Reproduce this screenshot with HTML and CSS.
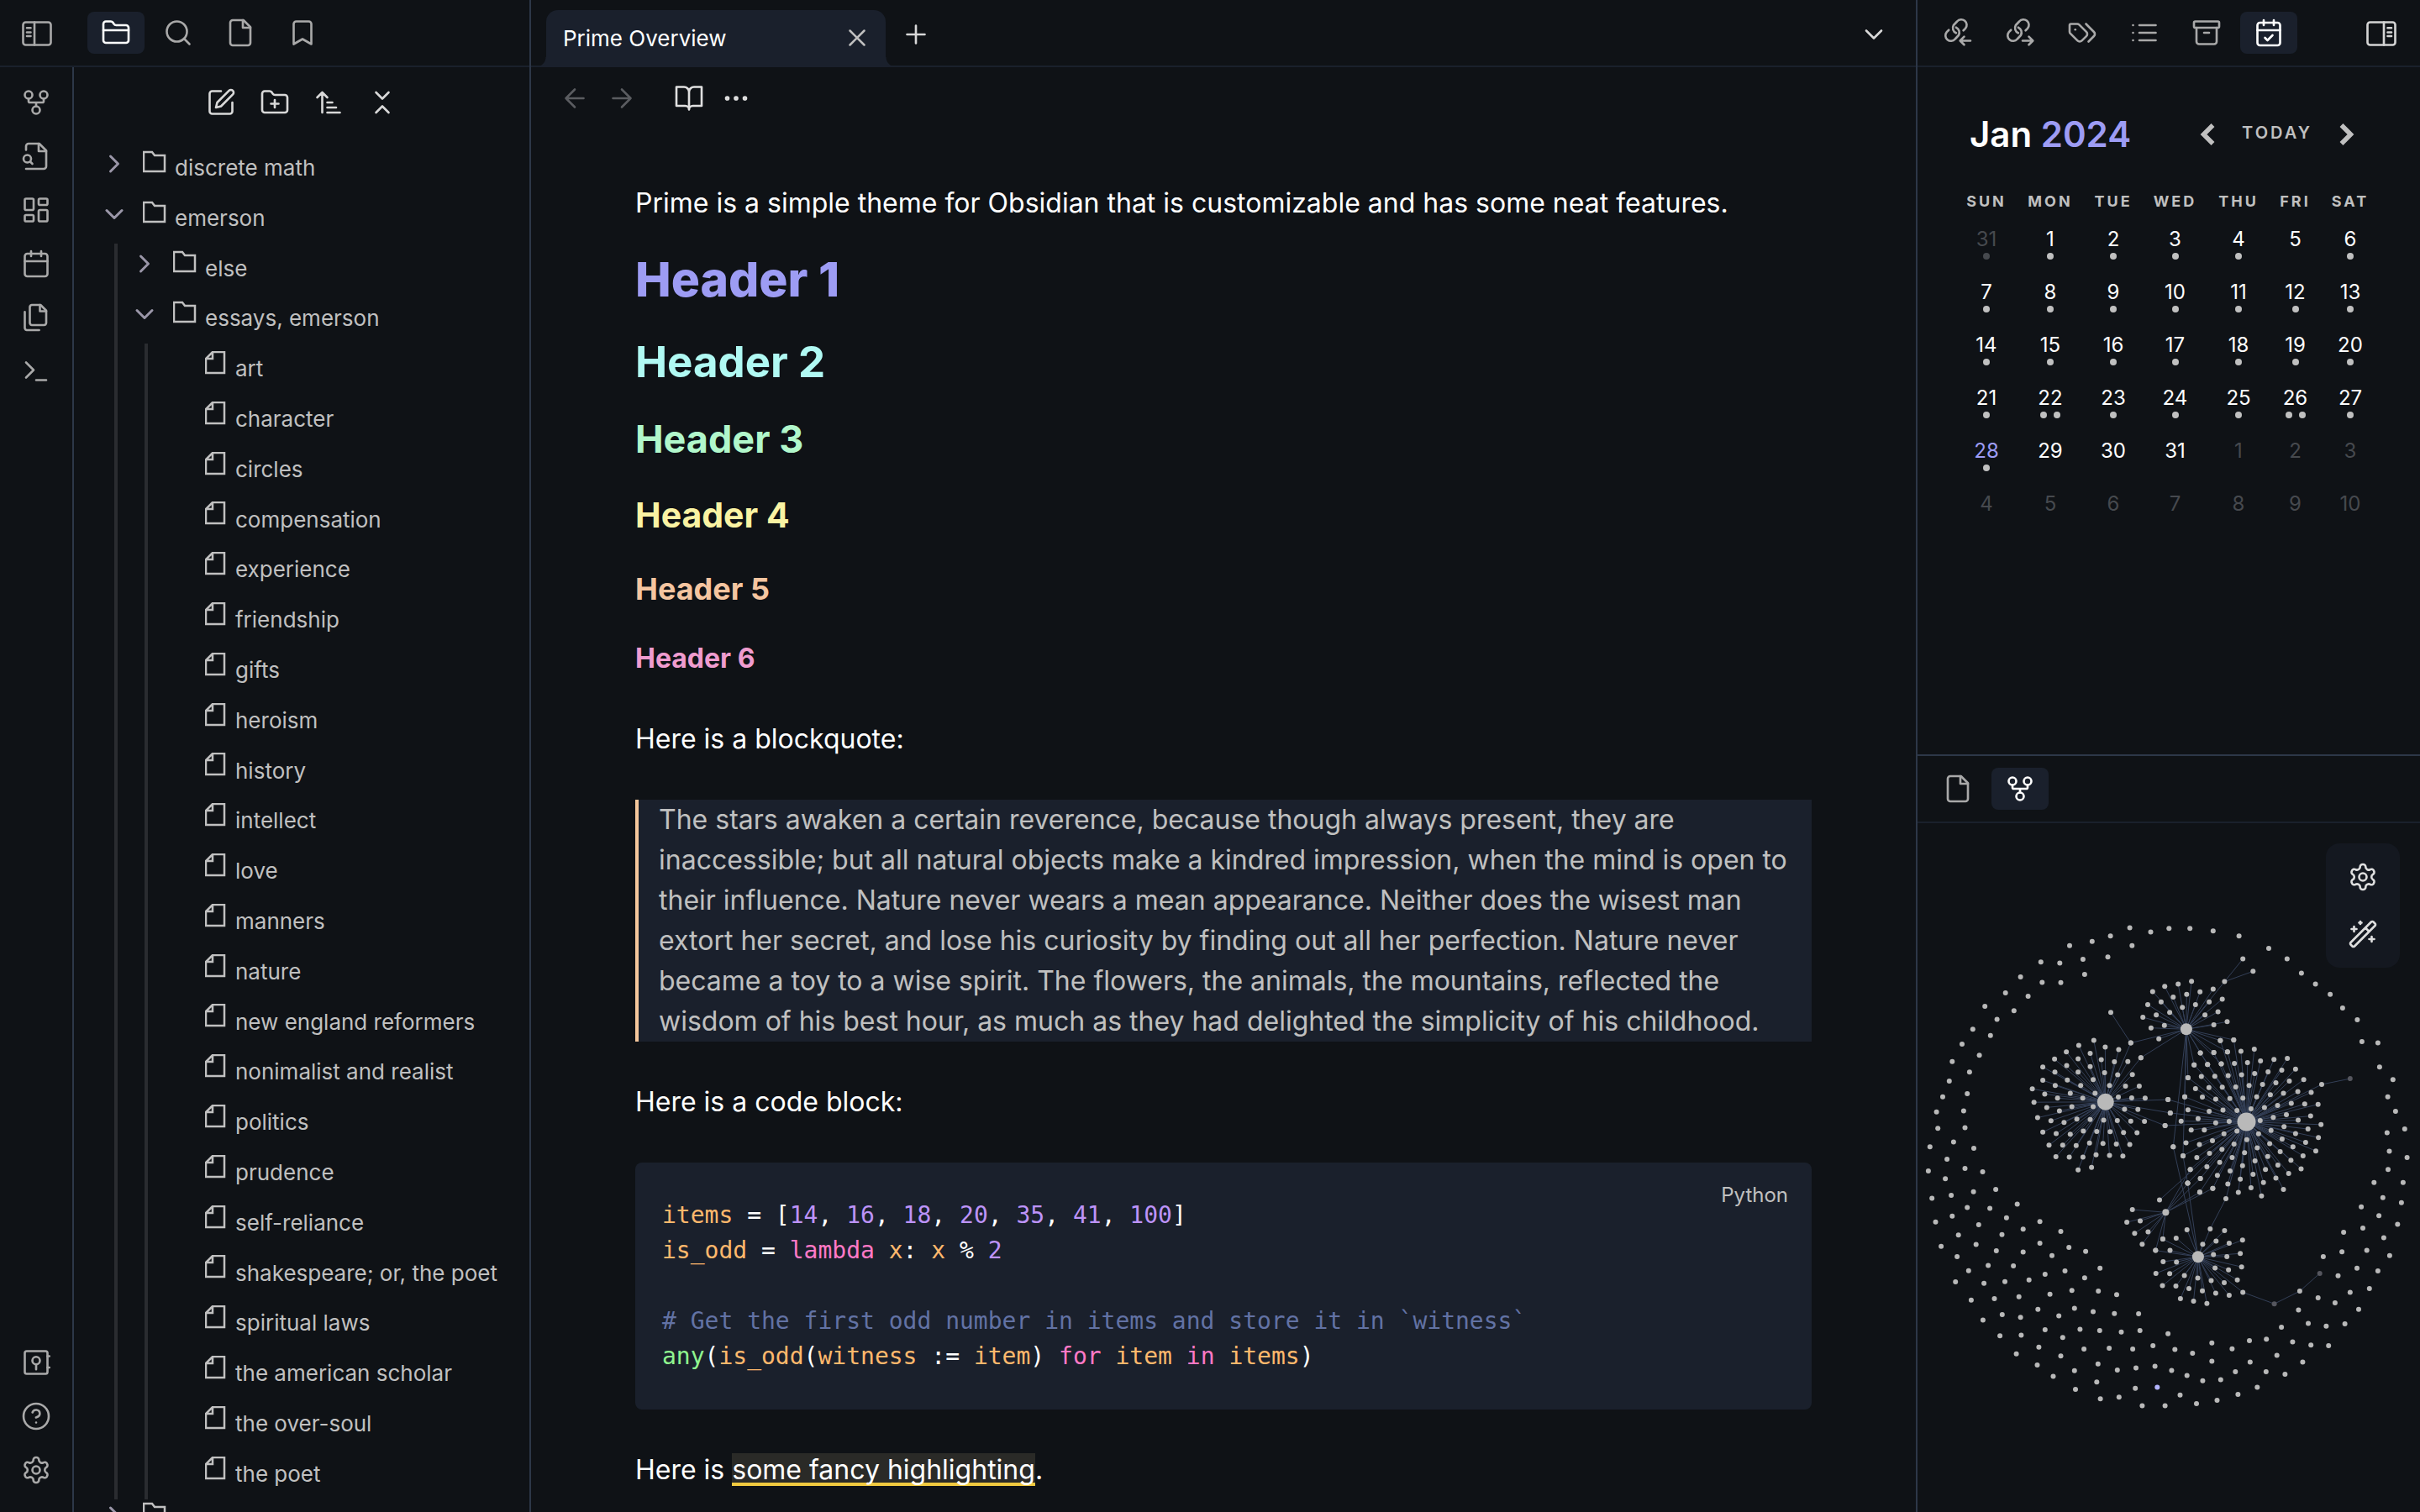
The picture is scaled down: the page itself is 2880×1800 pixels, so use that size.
FILE: index.html
```
<!DOCTYPE html>
<html lang="en">
<head>
<meta charset="utf-8">
<title>Prime Overview</title>
<link rel="stylesheet" href="styles.css">
</head>
<body>
<svg class="sprite" aria-hidden="true">
  <symbol id="i-panel-left" viewBox="0 0 24 24"><rect x="1" y="3" width="22" height="18" rx="2"/><path d="M10 3v18M4 7.500h3M4 11h3M4 14h3"/></symbol>
  <symbol id="i-panel-right" viewBox="0 0 24 24"><rect x="1" y="3" width="22" height="18" rx="2"/><path d="M14 3v18M17 7.500h3M17 11h3M17 14h3"/></symbol>
  <symbol id="i-folder-closed" viewBox="0 0 24 24"><path d="M4 20h16a2 2 0 0 0 2-2V8a2 2 0 0 0-2-2h-7.930a2 2 0 0 1-1.660-.9l-.82-1.200A2 2 0 0 0 7.930 3H4a2 2 0 0 0-2 2v13c0 1.100.9 2 2 2Z"/><path d="M2 10h20"/></symbol>
  <symbol id="i-search" viewBox="0 0 24 24"><circle cx="11" cy="11" r="8"/><path d="m21 21-4.300-4.300"/></symbol>
  <symbol id="i-file" viewBox="0 0 24 24"><path d="M14.500 2H6a2 2 0 0 0-2 2v16a2 2 0 0 0 2 2h12a2 2 0 0 0 2-2V7.500L14.500 2z"/><path d="M14 2v6h6"/></symbol>
  <symbol id="i-bookmark" viewBox="0 0 24 24"><path d="m19 21-7-4-7 4V5a2 2 0 0 1 2-2h10a2 2 0 0 1 2 2v16z"/></symbol>
  <symbol id="i-fork" viewBox="0 0 24 24"><circle cx="12" cy="18" r="3"/><circle cx="6" cy="6" r="3"/><circle cx="18" cy="6" r="3"/><path d="M18 9v2c0 .6-.4 1-1 1H7c-.6 0-1-.4-1-1V9M12 12v3"/></symbol>
  <symbol id="i-file-search" viewBox="0 0 24 24"><path d="M4 22h14a2 2 0 0 0 2-2V7.500L14.500 2H6a2 2 0 0 0-2 2v3"/><path d="M14 2v6h6"/><circle cx="5" cy="14" r="3"/><path d="m9 18-1.500-1.500"/></symbol>
  <symbol id="i-dashboard" viewBox="0 0 24 24"><rect x="3" y="3" width="7" height="9" rx="1"/><rect x="14" y="3" width="7" height="5" rx="1"/><rect x="14" y="12" width="7" height="9" rx="1"/><rect x="3" y="16" width="7" height="5" rx="1"/></symbol>
  <symbol id="i-calendar" viewBox="0 0 24 24"><rect x="3" y="4" width="18" height="18" rx="2"/><path d="M16 2v4M8 2v4M3 10h18"/></symbol>
  <symbol id="i-calendar-check" viewBox="0 0 24 24"><rect x="3" y="4" width="18" height="18" rx="2"/><path d="M16 2v4M8 2v4M3 10h18M9 16l2 2 4-4"/></symbol>
  <symbol id="i-files" viewBox="0 0 24 24"><path d="M15.500 2H8.600c-.4 0-.8.2-1.100.5-.3.3-.5.7-.5 1.100v12.800c0 .4.2.8.5 1.100.3.3.7.5 1.100.5h9.800c.4 0 .8-.2 1.100-.5.3-.3.5-.7.5-1.100V6.500L15.500 2z"/><path d="M3 7.600v12.800c0 .4.2.8.5 1.100.3.3.7.5 1.100.5h9.800M15 2v5h5"/></symbol>
  <symbol id="i-terminal" viewBox="0 0 24 24"><path d="m4 17 6-6-6-6M12 19h8"/></symbol>
  <symbol id="i-vault" viewBox="0 0 24 24"><rect x="3" y="3" width="18" height="18" rx="1.500"/><circle cx="12" cy="10.500" r="3"/><path d="M12 13.500v4M21 7h1.500M21 16h1.500"/></symbol>
  <symbol id="i-help" viewBox="0 0 24 24"><circle cx="12" cy="12" r="10"/><path d="M9.090 9a3 3 0 0 1 5.830 1c0 2-3 3-3 3M12 17h.01"/></symbol>
  <symbol id="i-gear" viewBox="0 0 24 24"><path d="M12.220 2h-.44a2 2 0 0 0-2 2v.18a2 2 0 0 1-1 1.730l-.43.25a2 2 0 0 1-2 0l-.15-.08a2 2 0 0 0-2.730.73l-.22.38a2 2 0 0 0 .73 2.730l.15.1a2 2 0 0 1 1 1.720v.51a2 2 0 0 1-1 1.740l-.15.09a2 2 0 0 0-.73 2.730l.22.38a2 2 0 0 0 2.730.73l.15-.08a2 2 0 0 1 2 0l.43.25a2 2 0 0 1 1 1.730V20a2 2 0 0 0 2 2h.44a2 2 0 0 0 2-2v-.18a2 2 0 0 1 1-1.730l.43-.25a2 2 0 0 1 2 0l.15.08a2 2 0 0 0 2.730-.73l.22-.39a2 2 0 0 0-.73-2.730l-.15-.08a2 2 0 0 1-1-1.740v-.5a2 2 0 0 1 1-1.740l.15-.09a2 2 0 0 0 .73-2.730l-.22-.38a2 2 0 0 0-2.730-.73l-.15.08a2 2 0 0 1-2 0l-.43-.25a2 2 0 0 1-1-1.730V4a2 2 0 0 0-2-2z"/><circle cx="12" cy="12" r="3"/></symbol>
  <symbol id="i-edit" viewBox="0 0 24 24"><path d="M12 3H5a2 2 0 0 0-2 2v14a2 2 0 0 0 2 2h14a2 2 0 0 0 2-2v-7"/><path d="M18.375 2.625a2.121 2.121 0 1 1 3 3L12 15l-4 1 1-4Z"/></symbol>
  <symbol id="i-folder-plus" viewBox="0 0 24 24"><path d="M4 20h16a2 2 0 0 0 2-2V8a2 2 0 0 0-2-2h-7.930a2 2 0 0 1-1.660-.9l-.82-1.200A2 2 0 0 0 7.930 3H4a2 2 0 0 0-2 2v13c0 1.100.9 2 2 2ZM12 10v6M9 13h6"/></symbol>
  <symbol id="i-sort" viewBox="0 0 24 24"><path d="m3 8 4-4 4 4M7 4v16M11 12h4M11 16h7M11 20h10"/></symbol>
  <symbol id="i-collapse" viewBox="0 0 24 24"><path d="m7 20 5-5 5 5M7 4l5 5 5-5"/></symbol>
  <symbol id="i-x" viewBox="0 0 24 24"><path d="M18 6 6 18M6 6l12 12"/></symbol>
  <symbol id="i-plus" viewBox="0 0 24 24"><path d="M5 12h14M12 5v14"/></symbol>
  <symbol id="i-down" viewBox="0 0 24 24"><path d="m6 9 6 6 6-6"/></symbol>
  <symbol id="i-right" viewBox="0 0 24 24"><path d="m9 6 6 6-6 6"/></symbol>
  <symbol id="i-left" viewBox="0 0 24 24"><path d="m15 6-6 6 6 6"/></symbol>
  <symbol id="i-arrow-left" viewBox="0 0 24 24"><path d="m12 19-7-7 7-7M19 12H5"/></symbol>
  <symbol id="i-arrow-right" viewBox="0 0 24 24"><path d="M5 12h14M12 5l7 7-7 7"/></symbol>
  <symbol id="i-book" viewBox="0 0 24 24"><path d="M2 3h6a4 4 0 0 1 4 4v14a3 3 0 0 0-3-3H2zM22 3h-6a4 4 0 0 0-4 4v14a3 3 0 0 1 3-3h7z"/></symbol>
  <symbol id="i-dots" viewBox="0 0 24 24"><circle cx="12" cy="12" r="1"/><circle cx="19" cy="12" r="1"/><circle cx="5" cy="12" r="1"/></symbol>
  <symbol id="i-link-in" viewBox="0 0 24 24"><path d="M10.600 12.200A4.400 4.400 0 0 1 8.600 6L11.400 3A4.300 4.300 0 0 1 18 8.600L16.400 10.200"/><path d="M10.600 7.800A4.400 4.400 0 0 1 12.600 14L9.800 17A4.300 4.300 0 0 1 3.200 11.400L4.800 9.800"/><path d="M22 18.300h-8M17 15.100l-3.200 3.200 3.200 3.200"/></symbol>
  <symbol id="i-link-out" viewBox="0 0 24 24"><path d="M10.600 12.200A4.400 4.400 0 0 1 8.600 6L11.400 3A4.300 4.300 0 0 1 18 8.600L16.400 10.200"/><path d="M10.600 7.800A4.400 4.400 0 0 1 12.600 14L9.800 17A4.300 4.300 0 0 1 3.200 11.400L4.800 9.800"/><path d="M14 18.300h8M19 15.100l3.200 3.200-3.200 3.200"/></symbol>
  <symbol id="i-tags" viewBox="0 0 24 24"><path d="m15 5 6.300 6.300a2.400 2.400 0 0 1 0 3.400L17 19"/><path d="M9.586 5.586A2 2 0 0 0 8.172 5H3a1 1 0 0 0-1 1v5.172a2 2 0 0 0 .586 1.414L8.290 18.290a2.426 2.426 0 0 0 3.420 0l3.580-3.580a2.426 2.426 0 0 0 0-3.420z"/><path d="M6.500 9.500h.01"/></symbol>
  <symbol id="i-list" viewBox="0 0 24 24"><path d="M8 6h13M8 12h13M8 18h13M3 6h.01M3 12h.01M3 18h.01"/></symbol>
  <symbol id="i-archive" viewBox="0 0 24 24"><rect x="2" y="3" width="20" height="5" rx="1"/><path d="M4 8v11a2 2 0 0 0 2 2h12a2 2 0 0 0 2-2V8M10 12h4"/></symbol>
  <symbol id="i-wand" viewBox="0 0 24 24"><path d="m21.640 3.640-1.280-1.280a1.210 1.210 0 0 0-1.720 0L2.360 18.640a1.210 1.210 0 0 0 0 1.720l1.280 1.280a1.200 1.200 0 0 0 1.720 0L21.640 5.360a1.200 1.200 0 0 0 0-1.720ZM14 7l3 3M5 6v4M19 14v4M10 2v2M7 8H3M21 16h-4M11 3H9"/></symbol>
  <symbol id="i-tree-folder" viewBox="0 0 28 26"><path d="M1 1h10l3 4h12v19H1z"/></symbol>
  <symbol id="i-tree-file" viewBox="0 0 26 28"><path d="M9 1h14v25H1V9zM9 1v8H1"/></symbol>
</svg>

<div class="app">
  <aside class="left">
    <header class="bar">
      <button class="tool toggle" aria-label="Collapse sidebar"><svg class="icon"><use href="#i-panel-left"/></svg></button>
      <nav class="tabs">
        <button class="tool active" aria-label="Files"><svg class="icon"><use href="#i-folder-closed"/></svg></button>
        <button class="tool" aria-label="Search"><svg class="icon"><use href="#i-search"/></svg></button>
        <button class="tool" aria-label="File"><svg class="icon"><use href="#i-file"/></svg></button>
        <button class="tool" aria-label="Bookmarks"><svg class="icon"><use href="#i-bookmark"/></svg></button>
      </nav>
    </header>
    <div class="left-body">
      <nav class="ribbon">
        <button class="rib" aria-label="Graph view"><svg class="icon"><use href="#i-fork"/></svg></button>
        <button class="rib" aria-label="Quick switcher"><svg class="icon"><use href="#i-file-search"/></svg></button>
        <button class="rib" aria-label="Canvas"><svg class="icon"><use href="#i-dashboard"/></svg></button>
        <button class="rib" aria-label="Daily note"><svg class="icon"><use href="#i-calendar"/></svg></button>
        <button class="rib" aria-label="Templates"><svg class="icon"><use href="#i-files"/></svg></button>
        <button class="rib" aria-label="Command palette"><svg class="icon"><use href="#i-terminal"/></svg></button>
        <span class="spring"></span>
        <button class="rib" aria-label="Open vault"><svg class="icon"><use href="#i-vault"/></svg></button>
        <button class="rib" aria-label="Help"><svg class="icon"><use href="#i-help"/></svg></button>
        <button class="rib" aria-label="Settings"><svg class="icon"><use href="#i-gear"/></svg></button>
      </nav>
      <section class="explorer">
        <div class="explorer-tools">
          <button aria-label="New note"><svg class="icon"><use href="#i-edit"/></svg></button>
          <button aria-label="New folder"><svg class="icon"><use href="#i-folder-plus"/></svg></button>
          <button aria-label="Sort"><svg class="icon"><use href="#i-sort"/></svg></button>
          <button aria-label="Collapse all"><svg class="icon"><use href="#i-collapse"/></svg></button>
        </div>
        <ul class="tree">
          <li><button class="row folder"><svg class="chev"><use href="#i-right"/></svg><svg class="glyph"><use href="#i-tree-folder"/></svg>discrete math</button></li>
          <li><button class="row folder"><svg class="chev"><use href="#i-down"/></svg><svg class="glyph"><use href="#i-tree-folder"/></svg>emerson</button>
            <ul class="branch">
              <li><button class="row folder"><svg class="chev"><use href="#i-right"/></svg><svg class="glyph"><use href="#i-tree-folder"/></svg>else</button></li>
              <li><button class="row folder"><svg class="chev"><use href="#i-down"/></svg><svg class="glyph"><use href="#i-tree-folder"/></svg>essays, emerson</button>
                <ul class="branch" id="essays"></ul>
              </li>
            </ul>
          </li>
          <li><button class="row folder" aria-label="Folder"><svg class="chev"><use href="#i-right"/></svg><svg class="glyph"><use href="#i-tree-folder"/></svg></button></li>
        </ul>
      </section>
    </div>
  </aside>

  <main class="center">
    <header class="bar">
      <div class="tab"><span class="tab-title">Prime Overview</span><button aria-label="Close tab"><svg class="icon small"><use href="#i-x"/></svg></button></div>
      <button class="new-tab" aria-label="New tab"><svg class="icon"><use href="#i-plus"/></svg></button>
      <button class="tab-list" aria-label="Tab list"><svg class="icon"><use href="#i-down"/></svg></button>
    </header>
    <div class="view-head">
      <button class="dim" aria-label="Back"><svg class="icon"><use href="#i-arrow-left"/></svg></button>
      <button class="dim" aria-label="Forward"><svg class="icon"><use href="#i-arrow-right"/></svg></button>
      <button class="mode" aria-label="Reading view"><svg class="icon"><use href="#i-book"/></svg></button>
      <button aria-label="More options"><svg class="icon"><use href="#i-dots"/></svg></button>
    </div>
    <article class="note">
      <p>Prime is a simple theme for Obsidian that is customizable and has some neat features.</p>
      <h1>Header 1</h1>
      <h2>Header 2</h2>
      <h3>Header 3</h3>
      <h4>Header 4</h4>
      <h5>Header 5</h5>
      <h6>Header 6</h6>
      <p>Here is a blockquote:</p>
      <blockquote>The stars awaken a certain reverence, because though always present, they are inaccessible; but all natural objects make a kindred impression, when the mind is open to their influence. Nature never wears a mean appearance. Neither does the wisest man extort her secret, and lose his curiosity by finding out all her perfection. Nature never became a toy to a wise spirit. The flowers, the animals, the mountains, reflected the wisdom of his best hour, as much as they had delighted the simplicity of his childhood.</blockquote>
      <p>Here is a code block:</p>
      <div class="code">
        <span class="lang">Python</span>
<pre><code><b class="v">items</b> = [<b class="n">14</b>, <b class="n">16</b>, <b class="n">18</b>, <b class="n">20</b>, <b class="n">35</b>, <b class="n">41</b>, <b class="n">100</b>]
<b class="v">is_odd</b> = <b class="k">lambda</b> <b class="v">x</b>: <b class="v">x</b> % <b class="n">2</b>

<b class="c"># Get the first odd number in items and store it in `witness`</b>
<b class="f">any</b>(<b class="v">is_odd</b>(<b class="v">witness</b> := <b class="v">item</b>) <b class="k">for</b> <b class="v">item</b> <b class="k">in</b> <b class="v">items</b>)</code></pre>
      </div>
      <p>Here is <mark>some fancy highlighting</mark>.</p>
    </article>
  </main>

  <aside class="right">
    <header class="bar">
      <nav class="tabs">
        <button class="tool" aria-label="Backlinks"><svg class="icon"><use href="#i-link-in"/></svg></button>
        <button class="tool" aria-label="Outgoing links"><svg class="icon"><use href="#i-link-out"/></svg></button>
        <button class="tool" aria-label="Tags"><svg class="icon"><use href="#i-tags"/></svg></button>
        <button class="tool" aria-label="Outline"><svg class="icon"><use href="#i-list"/></svg></button>
        <button class="tool" aria-label="Archive"><svg class="icon"><use href="#i-archive"/></svg></button>
        <button class="tool active" aria-label="Calendar"><svg class="icon"><use href="#i-calendar-check"/></svg></button>
      </nav>
      <button class="tool toggle bright" aria-label="Collapse sidebar"><svg class="icon"><use href="#i-panel-right"/></svg></button>
    </header>
    <section class="calendar">
      <div class="cal-head">
        <h2 class="month">Jan <span>2024</span></h2>
        <div class="cal-nav">
          <button aria-label="Previous month"><svg class="icon bold"><use href="#i-left"/></svg></button>
          <button class="today">TODAY</button>
          <button aria-label="Next month"><svg class="icon bold"><use href="#i-right"/></svg></button>
        </div>
      </div>
      <table>
        <colgroup><col class="sun"><col class="mon"><col class="tue"><col class="wed"><col class="thu"><col class="fri"><col class="sat"></colgroup>
        <thead><tr><th>SUN</th><th>MON</th><th>TUE</th><th>WED</th><th>THU</th><th>FRI</th><th>SAT</th></tr></thead>
        <tbody id="days"></tbody>
      </table>
    </section>
    <section class="graph-pane">
      <header class="bar">
        <nav class="tabs">
          <button class="tool" aria-label="File"><svg class="icon"><use href="#i-file"/></svg></button>
          <button class="tool active" aria-label="Graph view"><svg class="icon"><use href="#i-fork"/></svg></button>
        </nav>
      </header>
      <div class="graph">
        <svg id="graph" viewBox="0 0 598 820" role="img" aria-label="Note graph"></svg>
        <div class="controls">
          <button aria-label="Graph settings"><svg class="icon"><use href="#i-gear"/></svg></button>
          <button aria-label="Animate"><svg class="icon"><use href="#i-wand"/></svg></button>
        </div>
      </div>
    </section>
  </aside>
</div>
<script src="app.js"></script>
</body>
</html>
```
FILE: styles.css
```
:root {
  --bg: #0f1216;
  --raised: #1a202c;
  --line: #2d3748;
  --line-soft: #1a202c;
  --text: #ffffff;
  --muted: #c0c0c0;
  --icon: #a9a9a9;
  --accent: #9d9cf4;
}

* { box-sizing: border-box; }

html, body { height: 100%; }

body {
  margin: 0;
  background: var(--bg);
  color: var(--text);
  font-family: Inter, "Liberation Sans", sans-serif;
  overflow: hidden;
}

button {
  display: flex;
  align-items: center;
  justify-content: center;
  margin: 0;
  padding: 0;
  border: 0;
  background: none;
  color: inherit;
  font: inherit;
}

.sprite { display: none; }

.icon, .chev {
  flex: none;
  width: 36px;
  height: 36px;
  fill: none;
  stroke: currentColor;
  stroke-width: 1.75px;
  stroke-linecap: round;
  stroke-linejoin: round;
}

.icon.small { width: 34px; height: 34px; }
.icon.bold { width: 44px; height: 44px; stroke-width: 3px; stroke-linecap: butt; stroke-linejoin: miter; }

.app {
  display: grid;
  grid-template-columns: 632px minmax(0, 1fr) 600px;
  height: 100vh;
}

.bar {
  display: flex;
  align-items: center;
  flex: none;
  height: 80px;
  border-bottom: 2px solid var(--line-soft);
}

.tabs { display: flex; gap: 6px; }

.tool {
  width: 68px;
  height: 50px;
  border-radius: 8px;
  color: var(--icon);
}

.tool.active { background: var(--raised); color: var(--text); }
.tool.toggle { margin-top: 2px; }
.tool.bright { color: #d4d4d4; }

/* Left sidebar */
.left {
  display: flex;
  flex-direction: column;
  min-height: 0;
  border-right: 2px solid var(--line);
}

.left .bar { gap: 26px; padding-left: 10px; }

.left-body {
  display: flex;
  flex: 1;
  min-height: 0;
}

.ribbon {
  display: flex;
  flex-direction: column;
  flex: none;
  width: 88px;
  padding: 10px 0 18px;
  border-right: 2px solid var(--line);
}

.rib { height: 64px; color: var(--icon); }
.spring { flex: 1; }

.explorer {
  flex: 1;
  min-width: 0;
  overflow: hidden;
}

.explorer-tools {
  display: flex;
  justify-content: center;
  gap: 28px;
  padding: 24px 0 30px;
  color: #d8d8d8;
}

.tree, .branch { margin: 0; padding: 0; list-style: none; }
.tree { padding: 0 32px 0 30px; }
.branch { margin-left: 18px; padding-left: 14px; border-left: 4px solid #2a2c30; }

.row {
  justify-content: flex-start;
  width: 100%;
  padding: 13px 0;
  color: var(--muted);
  font-size: 26px;
  line-height: 1.3;
  white-space: nowrap;
}

.row .chev { margin: -12px 0 -2px; color: #9a96a8; stroke-width: 2px; }

.glyph {
  flex: none;
  width: 28px;
  height: 28px;
  margin: -14px 10px 0 16px;
  fill: none;
  stroke: currentColor;
  stroke-width: 2.500px;
}

.row.file .glyph { width: 26px; margin-left: 54px; }

/* Note */
.center { display: flex; flex-direction: column; min-height: 0; }
.center .bar { padding: 4px 0 0 18px; }

.tab {
  position: relative;
  display: flex;
  align-items: center;
  justify-content: space-between;
  align-self: flex-end;
  width: 404px;
  height: 68px;
  margin-bottom: -2px;
  padding: 0 17px 2px 20px;
  border-radius: 14px 14px 0 0;
  background: var(--raised);
  font-size: 26px;
}

.tab::before, .tab::after {
  content: "";
  position: absolute;
  bottom: 0;
  width: 12px;
  height: 12px;
}

.tab::before { right: 100%; background: radial-gradient(circle at 0 0, transparent 11px, var(--raised) 12px); }
.tab::after { left: 100%; background: radial-gradient(circle at 100% 0, transparent 11px, var(--raised) 12px); }
.tab button { color: var(--muted); }

.new-tab { margin-left: 18px; color: #d8d8d8; }
.tab-list { margin-left: auto; margin-right: 32px; color: #d8d8d8; }

.view-head {
  display: flex;
  gap: 20px;
  padding: 19px 34px 17px;
  color: #e0e0e0;
}

.view-head .dim { color: #5a5c60; }
.view-head .mode { margin-left: 24px; }

.note {
  width: 100%;
  max-width: 1400px;
  margin: 66px auto 0;
  font-size: 32px;
  line-height: 48px;
}

.note > * { margin: 0; }
.note p + h1, .note h1 + h2, .note h2 + h3, .note h3 + h4, .note h4 + h5, .note h5 + h6 { margin-top: 32px; }
.note h6 + p, .note p + blockquote, .note blockquote + p, .note p + .code, .note .code + p { margin-top: 48px; }

.note h1 { color: #9d9cf4; font-size: 57px; font-weight: 800; line-height: 70px; }
.note h2 { color: #b0f9f3; font-size: 51px; font-weight: 700; line-height: 62px; }
.note h3 { color: #b1f7cb; font-size: 45px; font-weight: 700; line-height: 58px; }
.note h4 { color: #faf3a3; font-size: 41px; font-weight: 700; line-height: 58px; }
.note h5 { color: #f5c5a0; font-size: 36px; font-weight: 700; line-height: 54px; }
.note h6 { color: #f09ccf; font-size: 32px; font-weight: 700; line-height: 48px; }

blockquote {
  padding: 0 24px;
  border-left: 4px solid #f5c79c;
  background: var(--raised);
  color: var(--muted);
}

.code {
  position: relative;
  padding: 42px 32px;
  border-radius: 8px;
  background: var(--raised);
}

.code pre {
  margin: 0;
  font-family: "DejaVu Sans Mono", monospace;
  font-size: 28px;
  line-height: 42px;
}

.code code { font-family: inherit; }

.code b { font-weight: 400; }
.code .v { color: #ffb86c; }
.code .n { color: #bd93f9; }
.code .k { color: #ff79c6; }
.code .c { color: #6272a4; }
.code .f { color: #8ff58f; }

.lang {
  position: absolute;
  top: 23px;
  right: 28px;
  color: var(--muted);
  font-size: 24px;
  line-height: 32px;
}

mark {
  background: #2a2a27;
  box-shadow: inset 0 -4px #f0c93f;
  color: inherit;
}

/* Right sidebar */
.right {
  display: flex;
  flex-direction: column;
  min-height: 0;
  border-left: 2px solid var(--line);
}

.right .bar { justify-content: space-between; padding: 0 12px 0 14px; }

.calendar {
  flex: 0 0 818px;
  padding: 52px 48px 0 46px;
}

.cal-head {
  display: flex;
  align-items: center;
  justify-content: space-between;
  height: 56px;
  padding: 0 18px 0 16px;
}

.month { margin: 0; font-size: 42px; font-weight: 600; line-height: 56px; }
.month span { color: var(--accent); }

.cal-nav {
  display: flex;
  align-items: center;
  gap: 18px;
  color: var(--muted);
}

.today {
  padding-bottom: 4px;
  font-size: 20px;
  font-weight: 600;
  letter-spacing: 3px;
}

table {
  width: 100%;
  margin-top: 34px;
  border-collapse: collapse;
  table-layout: fixed;
}

.sun { width: 72px; }
.mon { width: 80px; }
.tue { width: 70px; }
.wed { width: 77px; }
.thu { width: 74px; }
.fri { width: 61px; }
.sat { width: 70px; }

th {
  height: 34px;
  padding: 0;
  color: var(--muted);
  font-size: 18px;
  font-weight: 700;
  letter-spacing: 3px;
}

td { height: 63px; padding: 0; vertical-align: top; }

.day {
  flex-direction: column;
  justify-content: flex-start;
  gap: 1px;
  width: 100%;
  padding-top: 14px;
  font-size: 24px;
  line-height: 30px;
}

.day.out { color: #46494e; }
.day.now { color: var(--accent); }

.dots { display: flex; gap: 8px; height: 8px; }
.dots i { width: 8px; height: 8px; border-radius: 50%; background: var(--muted); }
.out .dots i { background: #46494e; }

.graph-pane {
  display: flex;
  flex: 1;
  flex-direction: column;
  min-height: 0;
  border-top: 2px solid var(--line);
}

.graph { position: relative; flex: 1; min-height: 0; }
#graph { display: block; width: 100%; height: 100%; }
#graph line { stroke: #333f57; stroke-width: 1; }
#graph circle { fill: #b9b9b9; }
#graph .faint { fill: #55565e; }
#graph .current { fill: #b3b4ff; }

.controls {
  position: absolute;
  top: 24px;
  right: 24px;
  display: flex;
  flex-direction: column;
  gap: 32px;
  padding: 22px 26px;
  border-radius: 16px;
  background: #141820;
  color: #dedede;
}
```
FILE: app.js
```
const essays = [
  "art", "character", "circles", "compensation", "experience", "friendship", "gifts", "heroism",
  "history", "intellect", "love", "manners", "nature", "new england reformers",
  "nonimalist and realist", "politics", "prudence", "self-reliance", "shakespeare; or, the poet",
  "spiritual laws", "the american scholar", "the over-soul", "the poet"
];
document.getElementById("essays").innerHTML = essays.map(name =>
  `<li><button class="row file"><svg class="glyph"><use href="#i-tree-file"/></svg>${name}</button></li>`
).join("");

// January 2024: the grid opens on Sunday 31 December. Value = number of dots under the day.
const dotCount = { 5: 0, 22: 2, 26: 2, 29: 0, 30: 0, 31: 0 };
let rows = "";
for (let w = 0; w < 6; w++) {
  rows += "<tr>";
  for (let d = 0; d < 7; d++) {
    const n = w * 7 + d;
    const out = n < 1 || n > 31;
    const label = n < 1 ? 31 : n > 31 ? n - 31 : n;
    const dots = n > 31 ? 0 : n < 1 ? 1 : dotCount[n] ?? 1;
    rows += `<td><button class="day${out ? " out" : ""}${n === 28 ? " now" : ""}">${label}<span class="dots">${"<i></i>".repeat(dots)}</span></button></td>`;
  }
  rows += "</tr>";
}
document.getElementById("days").innerHTML = rows;

const toX = x => x / 2.57 - 12;
const toY = y => y / 2.45 + 80;

const hubs = [
  { at: [853, 405], r: 7, notes: [
    [750,295],[787,280],[828,273],[869,265],[854,303],[813,311],[895,296],[935,288],[776,325],[735,333],
    [841,341],[881,333],[923,325],[963,317],[802,356],[761,363],[720,370],[910,363],[950,354],[786,394],
    [745,401],[937,392],[978,383],[769,433],[957,438],[998,436],[970,266],[683,445],[714,488],[979,471],
    [877,509],[858,546],[896,474],[937,473],[813,748],[848,602],[960,506],[918,508],[843,774]] },
  { at: [606, 617], r: 10, notes: [
    [570,437],[524,452],[605,457],[646,464],[486,471],[559,475],[450,492],[522,491],[593,494],[633,500],
    [674,499],[414,515],[487,511],[559,514],[451,530],[522,530],[603,532],[643,538],[688,537],[414,554],
    [489,553],[568,552],[452,569],[530,569],[618,569],[667,571],[709,571],[382,579],[420,594],[498,592],
    [574,592],[459,606],[536,606],[645,603],[686,605],[727,606],[387,618],[426,633],[465,643],[503,631],
    [568,631],[664,638],[705,639],[398,663],[439,672],[479,677],[518,667],[559,668],[600,670],[642,671],
    [683,673],[725,674],[414,705],[455,709],[498,711],[538,702],[579,703],[620,704],[661,706],[702,707],
    [433,743],[475,743],[516,744],[557,737],[598,738],[639,740],[680,741],[454,777],[495,778],[537,778],
    [577,771],[618,773],[659,775],[522,815],[563,808],[683,445],[714,488],[797,610],[804,649],[788,686]] },
  { at: [1037, 675], r: 11, notes: [
    [957,438],[998,436],[979,471],[896,474],[937,473],[1020,469],[1061,463],[1040,502],[1080,497],[1121,493],
    [1162,490],[877,509],[918,508],[960,506],[1000,505],[1103,529],[1145,524],[1187,521],[858,546],[899,543],
    [940,542],[981,540],[1022,538],[1062,534],[1127,561],[1168,556],[1212,552],[881,578],[922,575],[963,574],
    [1004,573],[1045,569],[1086,566],[1110,596],[1150,592],[1194,587],[1235,589],[1267,566],[1068,602],[1026,606],
    [986,607],[943,609],[902,603],[848,602],[1092,633],[1132,627],[1174,621],[1215,623],[1256,624],[1051,637],
    [1008,642],[965,641],[923,644],[858,640],[1159,654],[1119,662],[1233,658],[1195,670],[1079,671],[984,674],
    [943,678],[889,666],[837,673],[1265,683],[1225,696],[1187,709],[1152,689],[1112,700],[1074,710],[1008,702],
    [968,710],[908,699],[868,699],[1257,721],[1218,735],[1179,748],[1146,725],[1108,739],[1038,727],[999,740],
    [933,730],[893,741],[852,736],[1249,760],[1210,774],[1173,787],[1140,762],[1070,751],[1031,765],[962,755],
    [924,767],[885,779],[843,774],[1102,776],[1063,789],[993,779],[955,793],[916,806],[865,814],[1204,812],
    [1166,826],[1133,801],[1095,814],[1025,803],[987,818],[948,831],[896,840],[857,854],[1127,839],[1089,852],
    [1057,828],[1018,842],[980,856],[934,869],[894,880],[1150,872],[1051,867],[1012,881],[1083,891],[974,899],
    [797,610],[804,649],[788,686],[771,903]] },
  { at: [790, 939], r: 4, notes: [
    [688,931],[671,968],[712,964],[695,1000],[736,996],[718,1032],[759,1050],[781,1017],
    [857,854],[896,840],[934,869],[894,880],[865,814]] },
  { at: [889, 1069], r: 7, notes: [
    [855,990],[926,987],[970,992],[822,1014],[781,1017],[944,1023],[984,1029],[1025,1020],[903,1032],[759,1050],
    [803,1050],[936,1062],[977,1068],[1018,1059],[782,1083],[823,1084],[941,1101],[982,1107],[1022,1098],[760,1117],
    [802,1118],[847,1123],[888,1131],[929,1138],[969,1144],[1009,1136],[780,1153],[821,1154],[861,1161],[902,1168],
    [943,1175],[984,1181],[835,1191],[875,1198],[916,1205],[1026,1172],[813,748],[857,854]] }
];

const links = [
  [970,266,1026,200],[970,266,1057,236],[683,445,622,356],[1267,566,1354,549],[974,899,926,987],
  [1026,1172,1122,1206],[1122,1206,1200,1169],[1200,1169,1261,1117],[843,774,857,854]
];

const loose = [
  [1026,200],[1057,236],[622,356],[1200,1169],
  [680,109],[621,133],[565,149],[744,121],[800,111],[864,111],[935,118],[1014,133],[1105,169],[1161,200],
  [1205,241],[1248,273],[1293,303],[1331,343],[1376,377],[1390,441],[1439,445],[1444,515],[1485,552],[1469,602],
  [1493,644],[1521,696],[1467,707],[1474,761],[1528,779],[1470,814],[1427,852],[1516,852],[1454,896],[1511,911],
  [1388,923],[1442,949],[1499,974],[1393,985],[1334,997],[1457,1013],[1405,1050],[1329,1054],[1475,1065],[1272,1068],
  [1375,1102],[1439,1110],[1317,1124],[1413,1161],[1354,1172],[1256,1188],[1308,1203],[1196,1224],[1380,1222],[1226,1263],
  [1338,1264],[1144,1274],[1281,1271],[1098,1309],[1178,1317],[1046,1313],[1234,1326],[1288,1328],[931,1320],[993,1337],
  [1130,1356],[1048,1376],[1209,1376],[931,1373],[872,1350],[818,1339],[797,1293],[751,1328],[689,1338],[617,1335],
  [540,1338],[1003,1404],[1097,1404],[1155,1411],[958,1427],[903,1430],[855,1415],[808,1400],[757,1388],[699,1393],
  [642,1399],[583,1381],[511,1401],[469,1358],[402,1332],[1070,1449],[1011,1470],[947,1487],[884,1497],[834,1472],
  [697,1452],[579,1434],[647,1478],[590,1483],[514,1455],[446,1417],[397,1384],[333,1352],[283,1299],[788,1503],
  [718,1503],[496,161],[687,161],[613,194],[537,201],[408,209],[466,212],[542,245],[346,252],[412,268],
  [469,269],[300,299],[369,309],[237,338],[326,351],[274,376],[200,405],[254,423],[167,448],[220,481],
  [137,499],[190,530],[128,556],[183,593],[108,602],[172,643],[89,646],[176,692],[93,694],[141,734],
  [69,748],[203,752],[121,784],[176,811],[64,818],[230,821],[116,841],[270,872],[202,879],[134,889],
  [75,898],[336,915],[183,925],[252,927],[137,950],[303,955],[86,967],[405,966],[218,975],[354,988],
  [469,995],[156,1005],[289,1004],[210,1033],[405,1029],[103,1038],[494,1041],[272,1051],[354,1055],[545,1053],
  [152,1068],[442,1065],[247,1094],[324,1095],[187,1109],[589,1102],[482,1110],[421,1120],[147,1142],[298,1141],
  [234,1146],[372,1136],[542,1130],[503,1167],[584,1169],[436,1178],[640,1179],[341,1185],[266,1191],[195,1195],
  [511,1219],[568,1229],[399,1222],[290,1237],[346,1245],[463,1241],[633,1234],[707,1235],[231,1253],[528,1280],
  [588,1284],[421,1281],[654,1288],[711,1284],[348,1297],[475,1304]
];

const line = (a, b, c, d) =>
  `<line x1="${toX(a).toFixed(1)}" y1="${toY(b).toFixed(1)}" x2="${toX(c).toFixed(1)}" y2="${toY(d).toFixed(1)}"/>`;
const dot = (x, y, r, cls = "") =>
  `<circle cx="${toX(x).toFixed(1)}" cy="${toY(y).toFixed(1)}" r="${r}" class="${cls}"/>`;

let out = "";
hubs.forEach(h => h.notes.forEach(n => { out += line(...h.at, ...n); }));
links.forEach(l => { out += line(...l); });
hubs.forEach(h => h.notes.forEach(n => { out += dot(...n, 3); }));
loose.forEach(n => { out += dot(...n, 3); });
[[1354,549],[1122,1206],[1261,1117]].forEach(n => { out += dot(...n, 3, "faint"); });
out += dot(764, 1449, 3, "current");
hubs.forEach(h => { out += dot(...h.at, h.r); });
document.getElementById("graph").innerHTML = out;
```
